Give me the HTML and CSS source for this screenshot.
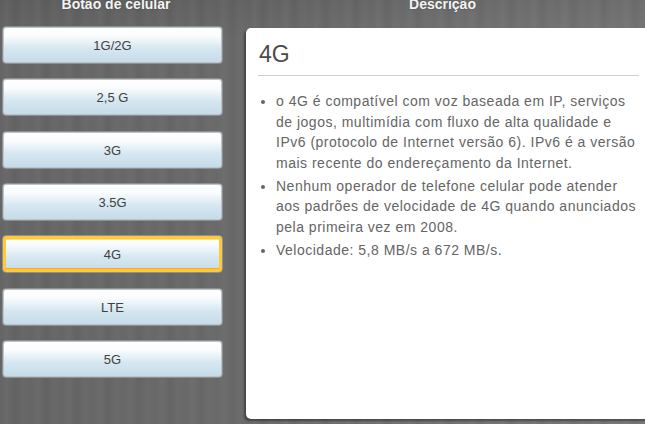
FILE: index.html
```html
<!DOCTYPE html>
<html lang="pt">
<head>
<meta charset="utf-8">
<link rel="stylesheet" href="styles.css">
</head>
<body>
<div class="app">
  <div class="heads">
    <div class="head head-left">Botão de celular</div>
    <div class="head head-right">Descrição</div>
  </div>
  <div class="main">
    <div class="buttons">
      <div class="btn">1G/2G</div>
      <div class="btn">2,5 G</div>
      <div class="btn">3G</div>
      <div class="btn">3.5G</div>
      <div class="btn active">4G</div>
      <div class="btn">LTE</div>
      <div class="btn">5G</div>
    </div>
    <div class="panel">
      <h1 class="title">4G</h1>
      <ul class="list">
        <li>o 4G é compatível com voz baseada em IP, serviços de jogos, multimídia com fluxo de alta qualidade e IPv6 (protocolo de Internet versão 6). IPv6 é a versão mais recente do endereçamento da Internet.</li>
        <li>Nenhum operador de telefone celular pode atender aos padrões de velocidade de 4G quando anunciados pela primeira vez em 2008.</li>
        <li>Velocidade: 5,8 MB/s a 672 MB/s.</li>
      </ul>
    </div>
  </div>
</div>
</body>
</html>
```
FILE: styles.css
```css
html, body {
  margin: 0;
  padding: 0;
  width: 645px;
  height: 424px;
  overflow: hidden;
}
body {
  background:
    repeating-linear-gradient(90deg, rgba(255,255,255,0.00) 0px, rgba(255,255,255,0.03) 7px, rgba(0,0,0,0.03) 15px, rgba(255,255,255,0.02) 23px, rgba(0,0,0,0.00) 31px),
    linear-gradient(180deg, rgba(0,0,0,0.08) 0px, rgba(0,0,0,0) 40px),
    linear-gradient(90deg, #656565 0%, #6a6a6a 40%, #727272 70%, #767676 100%);
  font-family: "Liberation Sans", Arial, sans-serif;
}
.app {
  display: flex;
  flex-direction: column;
}
.heads {
  display: flex;
  height: 14px;
  margin-top: -3px;
  margin-bottom: 15px;
}
.head {
  color: #f4f4f4;
  font-weight: bold;
  font-size: 14px;
  line-height: 14px;
  text-align: center;
  text-shadow: 0 0 2px rgba(0,0,0,0.3);
}
.head-left {
  width: 232px;
}
.head-right {
  flex: 1;
  padding-left: 8px;
}
.main {
  display: flex;
  align-items: flex-start;
}
.buttons {
  display: flex;
  flex-direction: column;
  gap: 14.33px;
  margin-left: 2px;
  width: 221px;
  flex-shrink: 0;
}
.btn {
  box-sizing: border-box;
  height: 38px;
  border: 1px solid #8d8f91;
  border-radius: 4px;
  box-shadow: inset 0 0 0 1px #b9c4cb;
  background: linear-gradient(180deg, #ffffff 0%, #fafcfd 25%, #d6e7f1 60%, #c4dbe8 100%);
  color: #404040;
  font-size: 13px;
  display: flex;
  align-items: center;
  justify-content: center;
  padding-top: 1px;
}
.btn.active {
  border: 1px solid #8d8f91;
  box-shadow: inset 0 0 0 3px #ffc93a, inset 0 4px 0 0 #ffe27a, inset 0 -4px 0 0 #faa923;
  background: linear-gradient(180deg, #ffffff 0%, #f7fbfd 25%, #d6e7f1 60%, #c4dbe8 100%);
}
.panel {
  box-sizing: border-box;
  flex-shrink: 0;
  margin-left: 23px;
  margin-top: 2px;
  width: 410px;
  height: 391px;
  background: #fff;
  border-radius: 5px 0 0 5px;
  box-shadow: -2px 2px 2px rgba(0,0,0,0.35);
  padding: 11px 0 0 12px;
  color: #5a5a5a;
}
.title {
  margin: 0;
  width: 380px;
  font-size: 23px;
  font-weight: normal;
  color: #4a4a4a;
  line-height: 30px;
  padding-left: 1px;
  padding-bottom: 6px;
  border-bottom: 1px solid #cfcfcf;
}
.list {
  margin: 15px 0 0 0;
  padding: 0 0 0 18px;
  width: 366px;
  font-size: 14px;
  letter-spacing: 0.5px;
  line-height: 20.5px;
  color: #656565;
}
.list li {
  margin-bottom: 2.5px;
}
```
